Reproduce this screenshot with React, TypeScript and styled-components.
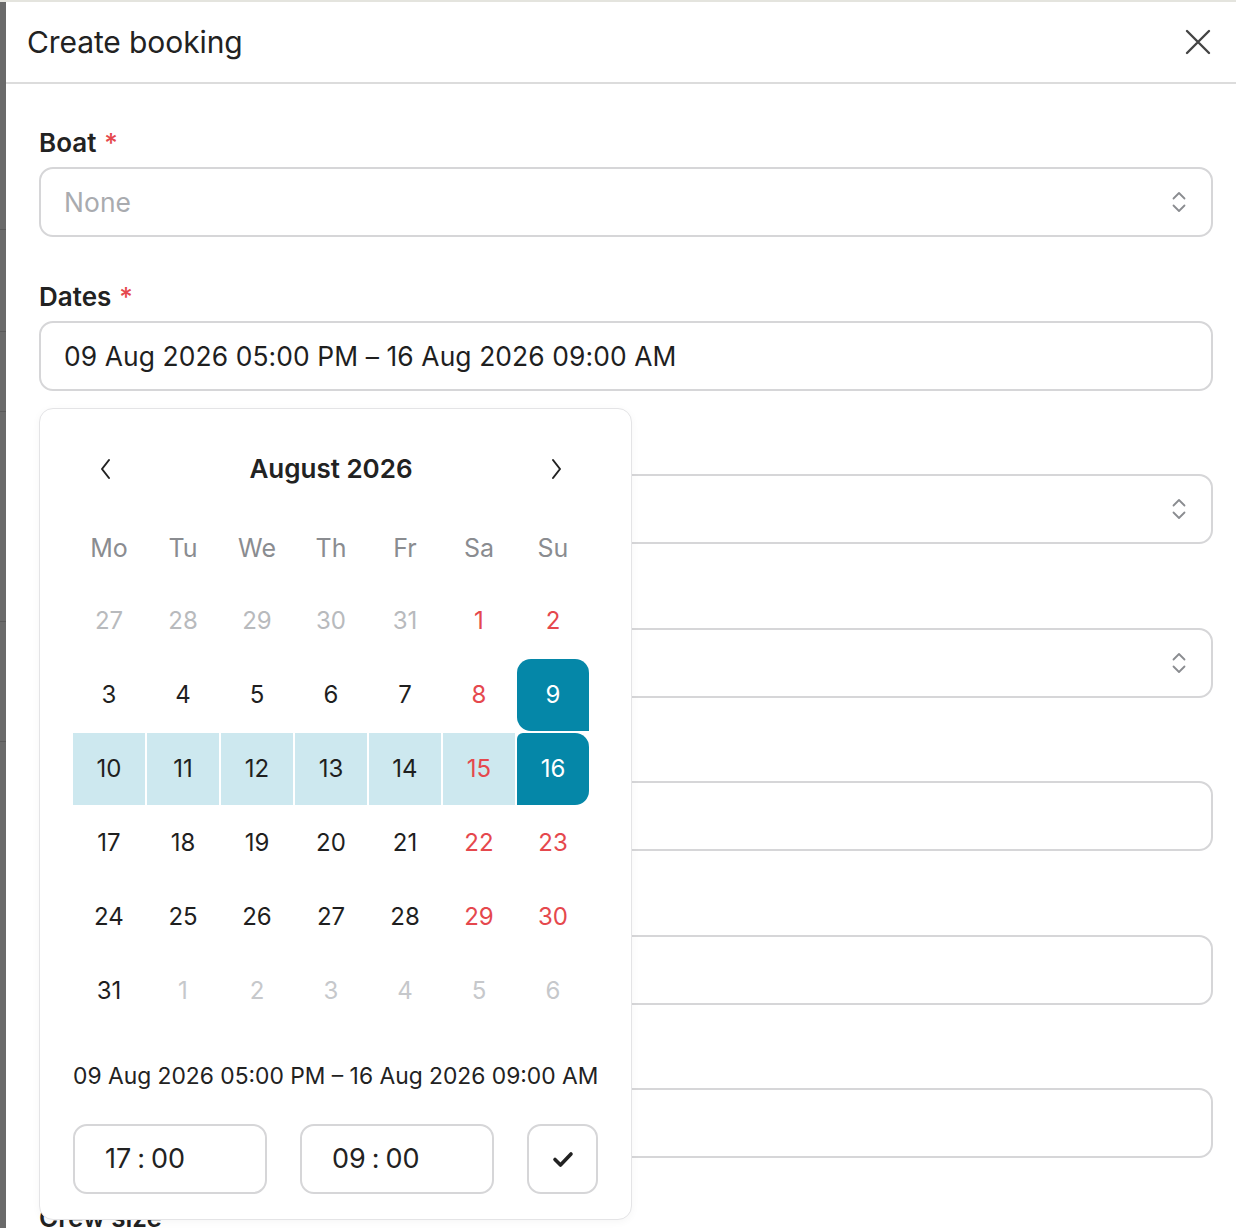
import React from "react";
import styled, { createGlobalStyle } from "styled-components";

const Global = createGlobalStyle`
  html, body { margin: 0; padding: 0; background: #fff; }
  body { font-family: Inter, "Noto Sans", Arial, sans-serif; color: #1f1f1f; }
  * { box-sizing: border-box; }
`;

const Page = styled.div`
  display: flex;
  width: 1236px;
  height: 1228px;
  overflow: hidden;
  border-top: 2px solid #e4e4de;
`;

const Backdrop = styled.div`
  width: 6px;
  flex: none;
  background: #6a6a6a;
  display: flex;
  flex-direction: column;
`;

const BackdropMark = styled.div<{ $h: number; $c: string }>`
  height: ${(p) => p.$h}px;
  border-bottom: 1px solid ${(p) => p.$c};
`;

const Modal = styled.div`
  flex: 1;
  background: #fff;
  display: flex;
  flex-direction: column;
`;

const Header = styled.div`
  height: 82px;
  flex: none;
  display: flex;
  align-items: center;
  justify-content: space-between;
  padding: 0 24px 0 21px;
  border-bottom: 2px solid #dcdcdc;
`;

const Title = styled.h2`
  margin: 0;
  font-size: 30px;
  line-height: 36px;
  font-weight: 400;
  color: #222;
  letter-spacing: -0.1px;
`;

const CloseButton = styled.button`
  border: 0;
  background: none;
  padding: 0;
  width: 28px;
  height: 28px;
  display: flex;
  align-items: center;
  justify-content: center;
  cursor: pointer;
`;

const Body = styled.div`
  padding: 43px 23px 0 33px;
  display: flex;
  flex-direction: column;
  gap: 43.5px;
`;

const Field = styled.div`
  position: relative;
  display: flex;
  flex-direction: column;
  gap: 8px;
`;

const Label = styled.label`
  font-size: 26px;
  line-height: 32px;
  font-weight: 600;
  color: #222;
`;

const Required = styled.span`
  color: #e5484d;
  margin-left: 8px;
  font-weight: 500;
`;

const Control = styled.div`
  height: 70px;
  border: 2px solid #d6d6d8;
  border-radius: 14px;
  background: #fff;
  display: flex;
  align-items: center;
  justify-content: space-between;
  padding: 0 24px 0 23px;
`;

const ControlText = styled.span<{ $placeholder?: boolean }>`
  font-size: 26.4px;
  color: ${(p) => (p.$placeholder ? "#a9abaf" : "#1f1f1f")};
  letter-spacing: 0.1px;
`;

const Popover = styled.div`
  position: absolute;
  top: calc(100% + 17px);
  left: 0;
  width: 593px;
  height: 812px;
  background: #fff;
  border: 1px solid #e4e4e6;
  border-radius: 14px;
  box-shadow: 0 2px 8px rgba(0, 0, 0, 0.04);
  padding: 24px 33px 0 33px;
  z-index: 10;
  display: flex;
  flex-direction: column;
`;

const Nav = styled.div`
  display: grid;
  grid-template-columns: 66px 1fr 66px;
  width: 516px;
  height: 72px;
  align-items: center;
`;

const NavButton = styled.button`
  border: 0;
  background: none;
  height: 72px;
  display: flex;
  align-items: center;
  justify-content: center;
  padding: 0;
  cursor: pointer;
`;

const MonthTitle = styled.div`
  text-align: center;
  font-size: 26px;
  font-weight: 600;
  color: #222;
`;

const Grid = styled.div`
  margin-top: 8px;
  display: grid;
  grid-template-columns: repeat(7, 72px);
  grid-template-rows: 70px;
  grid-auto-rows: 72px;
  gap: 2px;
`;

const WeekDay = styled.div`
  display: flex;
  align-items: center;
  justify-content: center;
  font-size: 25px;
  line-height: 30px;
  color: #8a8c90;
`;

type Tone = "normal" | "weekend" | "outside" | "outsideLight";
type Sel = "none" | "range" | "start" | "end";

const toneColor: Record<Tone, string> = {
  normal: "#1f1f1f",
  weekend: "#e5484d",
  outside: "#b8babd",
  outsideLight: "#c6c8cb",
};

const Day = styled.div<{ $tone: Tone; $sel: Sel }>`
  display: flex;
  align-items: center;
  justify-content: center;
  font-size: 24px;
  line-height: 30px;
  color: ${(p) => (p.$sel === "start" || p.$sel === "end" ? "#fff" : toneColor[p.$tone])};
  background: ${(p) =>
    p.$sel === "start" || p.$sel === "end" ? "#0587a8" : p.$sel === "range" ? "#cde8ef" : "transparent"};
  border-radius: ${(p) =>
    p.$sel === "start" ? "14px 14px 0 14px" : p.$sel === "end" ? "6px 14px 14px 0" : "0"};
`;

const RangeText = styled.div`
  margin-top: 35px;
  font-size: 22.8px;
  line-height: 28px;
  color: #222;
  white-space: nowrap;
`;

const TimeRow = styled.div`
  margin-top: 34px;
  display: flex;
  gap: 33px;
`;

const TimeInput = styled.div`
  width: 194px;
  height: 70px;
  border: 2px solid #d6d6d8;
  border-radius: 14px;
  display: flex;
  align-items: center;
  padding-left: 30px;
  font-size: 27px;
  color: #222;
`;

const Colon = styled.span`
  margin: 0 6px;
`;

const ConfirmButton = styled.button`
  width: 71px;
  height: 70px;
  border: 2px solid #d6d6d8;
  border-radius: 14px;
  background: #fff;
  display: flex;
  align-items: center;
  justify-content: center;
  padding: 0;
`;

const Chevrons = () => (
  <svg width="16" height="24" viewBox="0 0 16 24" fill="none" stroke="#8a8c90" strokeWidth="1.8" strokeLinecap="round" strokeLinejoin="round">
    <path d="M2.5 8.5 L8 3 L13.5 8.5" />
    <path d="M2.5 15.5 L8 21 L13.5 15.5" />
  </svg>
);

type DayCell = { n: number; tone: Tone; sel: Sel };

const weeks: DayCell[][] = (() => {
  const rows: DayCell[][] = [];
  const first: DayCell[] = [27, 28, 29, 30, 31].map((n) => ({ n, tone: "outside" as Tone, sel: "none" as Sel }));
  first.push({ n: 1, tone: "weekend", sel: "none" }, { n: 2, tone: "weekend", sel: "none" });
  rows.push(first);
  let d = 3;
  for (let w = 0; w < 4; w++) {
    const r: DayCell[] = [];
    for (let i = 0; i < 7; i++) {
      let sel: Sel = "none";
      if (d === 9) sel = "start";
      else if (d === 16) sel = "end";
      else if (d > 9 && d < 16) sel = "range";
      r.push({ n: d, tone: i >= 5 ? "weekend" : "normal", sel });
      d++;
    }
    rows.push(r);
  }
  const last: DayCell[] = [{ n: 31, tone: "normal", sel: "none" }];
  for (let i = 1; i <= 6; i++) last.push({ n: i, tone: "outsideLight", sel: "none" });
  rows.push(last);
  return rows;
})();

const weekDays = ["Mo", "Tu", "We", "Th", "Fr", "Sa", "Su"];

type FieldDef = { label: string; kind: "select" | "input" };

const moreFields: FieldDef[] = [
  { label: "Skipper", kind: "select" },
  { label: "Status", kind: "select" },
  { label: "Guests", kind: "input" },
  { label: "Price", kind: "input" },
  { label: "Deposit", kind: "input" },
];

export default function App() {
  return (
    <>
      <Global />
      <Page>
        <Backdrop>
          <BackdropMark $h={228} $c="#5a5a5a" />
          <BackdropMark $h={102} $c="#5a5a5a" />
          <BackdropMark $h={80} $c="#5a5a5a" />
          <BackdropMark $h={210} $c="#5a5a5a" />
          <BackdropMark $h={120} $c="#5a5a5a" />
        </Backdrop>
        <Modal>
          <Header>
            <Title>Create booking</Title>
            <CloseButton aria-label="Close">
              <svg width="26" height="26" viewBox="0 0 26 26" stroke="#444" strokeWidth="2.4" strokeLinecap="round">
                <path d="M2 2 L24 24 M24 2 L2 24" />
              </svg>
            </CloseButton>
          </Header>
          <Body>
            <Field>
              <Label>
                Boat<Required>*</Required>
              </Label>
              <Control>
                <ControlText $placeholder>None</ControlText>
                <Chevrons />
              </Control>
            </Field>
            <Field>
              <Label>
                Dates<Required>*</Required>
              </Label>
              <Control>
                <ControlText>09 Aug 2026 05:00 PM – 16 Aug 2026 09:00 AM</ControlText>
              </Control>
              <Popover>
                <Nav>
                  <NavButton aria-label="Previous month">
                    <svg width="14" height="22" viewBox="0 0 14 22" fill="none" stroke="#222" strokeWidth="2" strokeLinecap="round" strokeLinejoin="round">
                      <path d="M10 2 L3 11 L10 20" />
                    </svg>
                  </NavButton>
                  <MonthTitle>August 2026</MonthTitle>
                  <NavButton aria-label="Next month">
                    <svg width="14" height="22" viewBox="0 0 14 22" fill="none" stroke="#222" strokeWidth="2" strokeLinecap="round" strokeLinejoin="round">
                      <path d="M4 2 L11 11 L4 20" />
                    </svg>
                  </NavButton>
                </Nav>
                <Grid>
                  {weekDays.map((w) => (
                    <WeekDay key={w}>{w}</WeekDay>
                  ))}
                  {weeks.flat().map((c, i) => (
                    <Day key={i} $tone={c.tone} $sel={c.sel}>
                      {c.n}
                    </Day>
                  ))}
                </Grid>
                <RangeText>09 Aug 2026 05:00 PM – 16 Aug 2026 09:00 AM</RangeText>
                <TimeRow>
                  <TimeInput>
                    17<Colon>:</Colon>00
                  </TimeInput>
                  <TimeInput>
                    09<Colon>:</Colon>00
                  </TimeInput>
                  <ConfirmButton aria-label="Confirm">
                    <svg width="24" height="24" viewBox="0 0 24 24" fill="none" stroke="#222" strokeWidth="3.6" strokeLinecap="round" strokeLinejoin="round">
                      <path d="M4 12.5 L9.5 18 L20 7" />
                    </svg>
                  </ConfirmButton>
                </TimeRow>
              </Popover>
            </Field>
            {moreFields.map((f) => (
              <Field key={f.label}>
                <Label>{f.label}</Label>
                <Control>
                  <ControlText />
                  {f.kind === "select" && <Chevrons />}
                </Control>
              </Field>
            ))}
            <Field>
              <Label>Crew size</Label>
            </Field>
          </Body>
        </Modal>
      </Page>
    </>
  );
}
